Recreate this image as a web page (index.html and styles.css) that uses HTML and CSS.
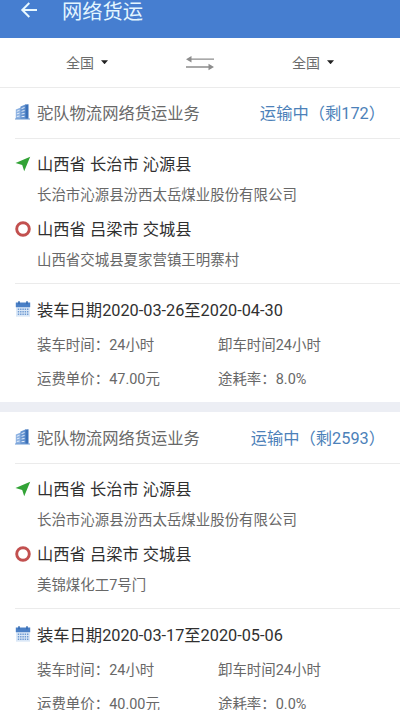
FILE: index.html
```
<!DOCTYPE html>
<html lang="zh-CN">
<head>
<meta charset="utf-8">
<title>网络货运</title>
<link rel="stylesheet" href="styles.css">
</head>
<body>
<svg class="defs" width="0" height="0">
  <symbol id="building" viewBox="0 0 16 16">
    <path d="M.8 5.500 7 3v12H.8z" fill="#8db2e2"/>
    <path d="M5.500 2.500 11 .3V15H5.500z" fill="#6694d0"/>
    <path d="m10.500.5 3-.2V15h-3z" fill="#3a70b8"/>
    <path d="M0 15h15" stroke="#6d99d2"/>
    <path d="M1.800 7.300 4.500 6.300M1.800 9.900l2.700-.8M1.800 12.500l2.700-.5M6.500 4.600l3-1.100M6.500 7.300l3-.8M6.500 10l3-.5M6.500 12.700l3-.3" stroke="#e4eefb" stroke-width="1"/>
  </symbol>
  <symbol id="arrow" viewBox="0 0 16 16"><path d="M15.200.8.5 7l6.700 2 2 6.300z" fill="#32a336"/></symbol>
  <symbol id="ring" viewBox="0 0 16 16"><circle cx="8" cy="8" r="6.300" fill="none" stroke="#c2504f" stroke-width="2.900"/></symbol>
  <symbol id="calendar" viewBox="0 0 16 16">
    <path d="M1 5h14v10.700H1z" fill="#dbe8f7"/>
    <path d="M.8 1.500h14.400v4.700H.8z" fill="#4b80c6"/>
    <path d="M4 .2v3M12 .2v3" stroke="#356bb2" stroke-width="1.600"/>
    <path d="M2.800 8.200h10.800M2.800 10.700h10.800M2.800 13.200h10.800" stroke="#6e9ad2" stroke-width="1.500" stroke-dasharray="1.400 .9"/>
  </symbol>
</svg>
<header class="topbar">
  <svg class="back" viewBox="0 0 18 18"><path d="M17 9H2.500M9.300 2 2.300 9l7 7" fill="none" stroke="#e8f8ff" stroke-width="2"/></svg>
  <h1>网络货运</h1>
</header>
<nav class="filter">
  <div class="region">全国<i class="caret"></i></div>
  <svg class="swap" viewBox="0 0 30 16"><path d="M5 4.200h24M1 12h23.500" stroke="#8d8d8d" stroke-width="1.300"/><path d="M1 4.200 6.500 1v6.400zM29 12 23.500 8.800v6.400z" fill="#8d8d8d"/></svg>
  <div class="region">全国<i class="caret"></i></div>
</nav>
<main>
  <article class="card">
    <div class="head"><svg class="icon high"><use href="#building"/></svg><span>驼队物流网络货运业务</span><span class="status">运输中（剩172）</span></div>
    <section class="route">
      <div class="place"><svg class="icon"><use href="#arrow"/></svg>山西省 长治市 沁源县</div>
      <p>长治市沁源县汾西太岳煤业股份有限公司</p>
      <div class="place"><svg class="icon"><use href="#ring"/></svg>山西省 吕梁市 交城县</div>
      <p>山西省交城县夏家营镇王明寨村</p>
    </section>
    <section class="info">
      <div class="place"><svg class="icon high"><use href="#calendar"/></svg>装车日期2020-03-26至2020-04-30</div>
      <div class="details"><span>装车时间：24小时</span><span>卸车时间24小时</span><span>运费单价：47.00元</span><span>途耗率：8.0%</span></div>
    </section>
  </article>
  <article class="card">
    <div class="head"><svg class="icon high"><use href="#building"/></svg><span>驼队物流网络货运业务</span><span class="status">运输中（剩2593）</span></div>
    <section class="route">
      <div class="place"><svg class="icon"><use href="#arrow"/></svg>山西省 长治市 沁源县</div>
      <p>长治市沁源县汾西太岳煤业股份有限公司</p>
      <div class="place"><svg class="icon"><use href="#ring"/></svg>山西省 吕梁市 交城县</div>
      <p>美锦煤化工7号门</p>
    </section>
    <section class="info">
      <div class="place"><svg class="icon high"><use href="#calendar"/></svg>装车日期2020-03-17至2020-05-06</div>
      <div class="details"><span>装车时间：24小时</span><span>卸车时间24小时</span><span>运费单价：40.00元</span><span>途耗率：0.0%</span></div>
    </section>
  </article>
</main>
</body>
</html>
```
FILE: styles.css
```
* { box-sizing: border-box; }
html, body { height: 710px; overflow: hidden; }
body {
  margin: 0;
  background: #fff;
  color: #303030;
  font: 16.3px/24px Roboto, "Noto Sans CJK SC", sans-serif;
}
.defs { display: block; }
.topbar {
  display: flex;
  align-items: flex-start;
  height: 37.5px;
  padding-left: 20px;
  background: #467ed0;
  color: #e4f6ff;
}
.back { width: 18px; height: 18px; margin-top: 1px; }
h1 { margin: 0 0 0 24px; font-size: 20.3px; line-height: 24px; font-weight: 400; }
.filter {
  display: flex;
  align-items: center;
  justify-content: space-between;
  height: 49.5px;
  padding: 1px 66px 0;
  color: #6c6c6c;
  font-size: 14px;
}
.region { display: flex; align-items: center; gap: 7px; }
.caret { width: 7px; height: 4px; margin-bottom: 1px; background: #222; clip-path: polygon(0 0, 100% 0, 50% 100%); }
.swap { width: 30px; height: 16px; }
.card { height: 325px; border-bottom: 10px solid #eceef4; }
.card:first-child { background: linear-gradient(#ebebeb, #ebebeb) 0 0 / 100% 1px no-repeat; }
.head {
  display: flex;
  align-items: center;
  height: 52px;
  margin-left: 15px;
  padding: 2px 15px 0 0;
  border-bottom: 1px solid #ebebeb;
  color: #686868;
}
.status { margin-left: auto; color: #4c81b9; }
.icon { flex: none; width: 16px; height: 16px; margin: 0 6px 2px 0; }
.icon.high { margin-bottom: 4px; }
.route { height: 145px; margin-left: 15px; padding-top: 9px; border-bottom: 1px solid #ebebeb; }
.place { display: flex; align-items: center; height: 32px; padding-top: 2px; }
.route p { height: 28px; margin: 0 0 5px 22px; color: #686868; font-size: 14.45px; line-height: 31px; }
.info { padding: 10px 0 0 15px; }
.details {
  display: grid;
  grid-template-columns: 181px 1fr;
  grid-auto-rows: 34px;
  margin: 3px 0 0 22px;
  color: #686868;
  font-size: 14.45px;
  line-height: 34px;
}
```
